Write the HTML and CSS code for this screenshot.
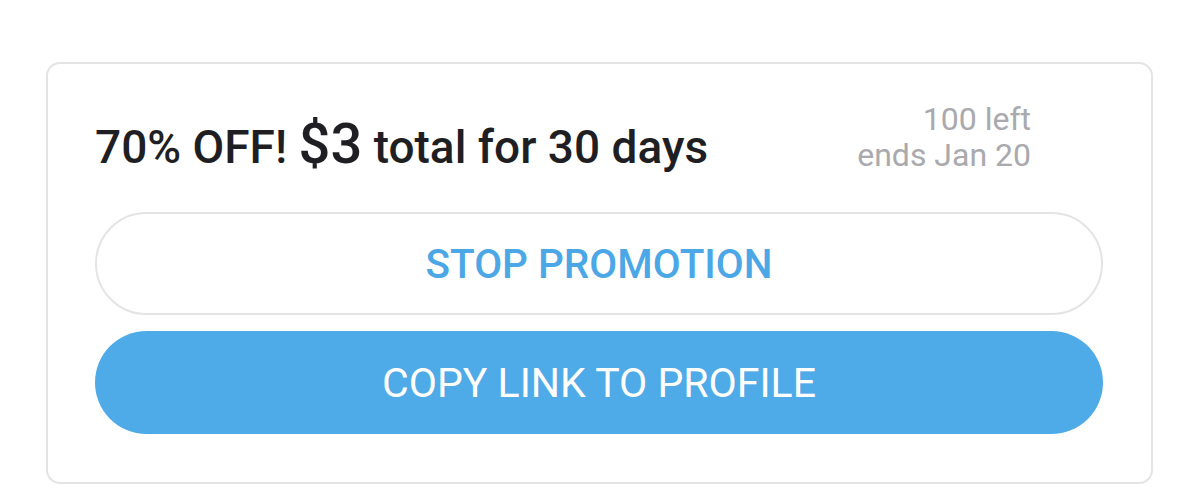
FILE: index.html
```html
<!DOCTYPE html>
<html lang="en">
<head>
<meta charset="utf-8">
<title>Promotion</title>
<link rel="stylesheet" href="styles.css">
</head>
<body>
<div class="card">
  <div class="header">
    <div class="title">70% OFF! <span class="price">$3</span> total for 30 days</div>
    <div class="meta">
      <div>100 left</div>
      <div>ends Jan 20</div>
    </div>
  </div>
  <button class="btn btn-outline">STOP PROMOTION</button>
  <button class="btn btn-solid">COPY LINK TO PROFILE</button>
</div>
</body>
</html>
```

FILE: styles.css
```css
* { box-sizing: border-box; }
html, body { margin: 0; padding: 0; background: #ffffff; }
body {
  font-family: Roboto, "Liberation Sans", sans-serif;
  width: 1200px;
  height: 490px;
  overflow: hidden;
  padding: 62px 47px 0 46px;
}
.card {
  border: 2px solid #e4e4e6;
  border-radius: 14px;
  padding: 37px 48px 48px 47px;
  display: flex;
  flex-direction: column;
  gap: 16px;
}
.header {
  display: flex;
  justify-content: space-between;
  align-items: flex-start;
  padding-right: 72px;
  margin-bottom: 19px;
}
.title {
  font-size: 46px;
  font-weight: 500;
  color: #1f1f23;
  line-height: 60px;
  padding-top: 13px;
}
.price { font-size: 56px; }
.meta {
  text-align: right;
  font-size: 32px;
  line-height: 36px;
  color: #a9a9ae;
}
.btn {
  display: block;
  width: 100%;
  height: 103px;
  border-radius: 52px;
  font-family: Roboto, "Liberation Sans", sans-serif;
  font-size: 41px;
  cursor: pointer;
}
.btn-outline {
  background: #ffffff;
  border: 2px solid #e4e4e6;
  color: #4ba7e6;
  font-weight: 500;
  font-size: 40.5px;
}
.btn-solid {
  background: #4faae8;
  border: none;
  color: #ffffff;
  font-weight: 400;
}
```
